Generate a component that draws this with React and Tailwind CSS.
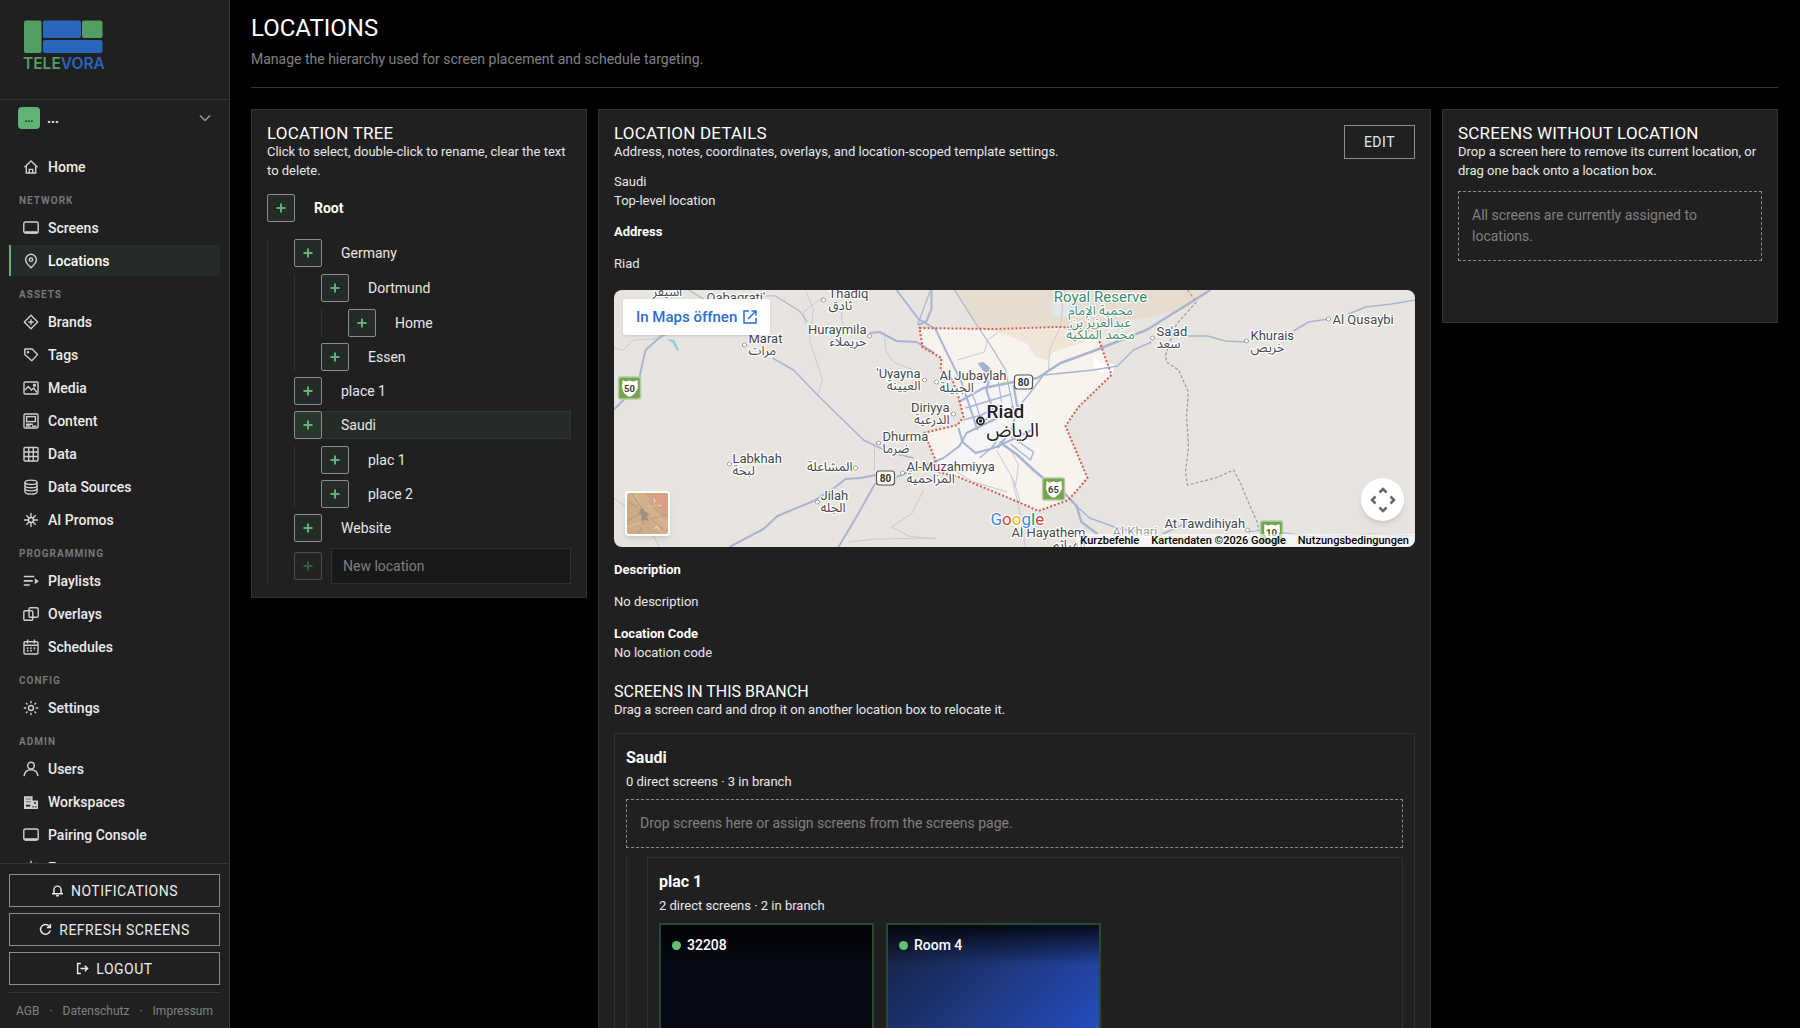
import React, { useState } from "react";

const ICONS = {
  home: (
    <>
      <path d="M1.5 8.2 8 2l6.5 6.2" />
      <path d="M3.3 7v7h9.4V7" />
      <path d="M6.3 14v-3.6h3.4V14" />
    </>
  ),
  screen: (
    <>
      <rect x="0.8" y="2" width="14.4" height="11" rx="1.8" />
      <path d="M2 12.400h12" strokeWidth="2.4" />
    </>
  ),
  pin: (
    <>
      <path d="M8 14.8C5 11.800 2.600 9.600 2.600 6.700a5.400 5.400 0 0 1 10.800 0C13.400 9.600 11 11.800 8 14.800Z" />
      <circle cx="8" cy="6.700" r="1.700" />
    </>
  ),
  brand: (
    <>
      <path d="m8 1.300 6.700 6.700L8 14.700 1.300 8Z" strokeLinejoin="round" />
      <path d="M8 5.200v5.600M5.200 8h5.600" />
    </>
  ),
  tag: (
    <>
      <path d="M1.800 2h7.400l5.300 5.600-5.700 6.200-7-6.300Z" strokeLinejoin="round" />
      <circle cx="5" cy="5.200" r="0.600" fill="currentColor" />
    </>
  ),
  media: (
    <>
      <rect x="1" y="2" width="14" height="12" rx="1" />
      <path d="m2 10 3.300-3.500L8.500 10l2.200-2L14 12.500" />
      <circle cx="11.500" cy="5.300" r="1" />
    </>
  ),
  content: (
    <>
      <rect x="1" y="1" width="14" height="14" rx="1.200" />
      <rect x="3.600" y="3.600" width="8.800" height="5" />
      <path d="M3 11.200h7M3 13h4.500" strokeWidth="1.600" />
      <path d="M9 13.200h4.500" />
    </>
  ),
  data: (
    <>
      <rect x="1" y="1.500" width="14" height="13.500" rx="1" />
      <path d="M1 6h14M1 10.500h14M5.700 1.500V15M10.300 1.500V15" />
    </>
  ),
  database: (
    <>
      <ellipse cx="8" cy="3.300" rx="6" ry="2.200" />
      <path d="M2 3.300v9.400c0 1.300 2.700 2.400 6 2.400s6-1.100 6-2.400V3.300" />
      <path d="M2 6.400c0 1.300 2.700 2.300 6 2.300s6-1 6-2.300M2 9.600c0 1.300 2.700 2.300 6 2.300s6-1 6-2.300" />
    </>
  ),
  spark: (
    <>
      <circle cx="8" cy="8" r="2.500" />
      <path d="M8 1v4.500M8 10.500V15M1 8h4.500M10.500 8H15M3.300 3.300l2.800 2.800M9.900 9.900l2.800 2.800M3.300 12.700l2.800-2.800M9.900 6.100l2.800-2.800" />
    </>
  ),
  playlist: (
    <>
      <path d="M0.800 3.500h10.500M0.800 7.800h9M0.800 12h6" strokeWidth="1.700" />
      <path d="M11.800 5.200v6l4-3Z" fill="currentColor" stroke="none" />
    </>
  ),
  overlay: (
    <>
      <rect x="0.800" y="4.800" width="9" height="9.500" rx="1.200" />
      <rect x="6" y="1.800" width="9.200" height="9.500" rx="1.200" />
    </>
  ),
  calendar: (
    <>
      <rect x="1" y="2.800" width="14" height="12.200" rx="1.200" />
      <path d="M1 6.300h14M4.600 0.600v4M11.400 0.600v4" />
      <path d="M4.600 8.300v4.500M8 8.300v4.500M11.400 8.300v3" strokeWidth="1.500" strokeDasharray="2 0.600" />
    </>
  ),
  sun: (
    <>
      <circle cx="8" cy="8" r="2.500" />
      <path d="M8 0.800v2.400M8 12.800v2.400M0.800 8h2.400M12.800 8h2.400M3 3l1.500 1.500M11.500 11.500 13 13M3 13l1.500-1.500M11.500 4.500 13 3" />
    </>
  ),
  user: (
    <>
      <circle cx="8" cy="4.600" r="3.300" />
      <path d="M1 15.200c.5-4 3.400-6.500 7-6.500s6.500 2.500 7 6.500" />
    </>
  ),
  building: (
    <>
      <path
        d="M1 2.300h8.600v4.200H15v8.500H1Z"
        fill="currentColor"
        stroke="none"
      />
      <path
        d="M3 10.800h4.300v1.800H3ZM11 8.200h2v1.600h-2ZM9.500 12h1.200v1.500H9.500ZM12.300 12h1.200v1.500h-1.200Z"
        fill="#202020"
        stroke="none"
      />
      <path d="M3 5h5M3 7.800h5" stroke="#202020" strokeWidth="0.600" />
    </>
  ),
  bell: (
    <>
      <path d="M3.600 12V7a4.400 4.400 0 0 1 8.800 0v5M1.200 12h13.600" />
      <path d="M6.300 14.500h3.400" />
    </>
  ),
  refresh: (
    <>
      <path d="M13.800 9a6 6 0 1 1-1.500-5.200l1.200 1.200" />
      <path d="M14 1.200v4.300H9.800" />
    </>
  ),
  logout: (
    <>
      <path d="M6 1.800H2v12.400h4M5.500 8H14M10.800 4.600 14.300 8l-3.500 3.400" />
    </>
  ),
};

function Icon({ name, className = "size-4", strokeWidth = 1.4 }) {
  return (
    <svg
      viewBox="0 0 16 16"
      className={className}
      fill="none"
      stroke="currentColor"
      strokeWidth={strokeWidth}
      aria-hidden="true"
    >
      {ICONS[name]}
    </svg>
  );
}

const NAV = [
  { items: [["Home", "home"]] },
  {
    title: "Network",
    items: [
      ["Screens", "screen"],
      ["Locations", "pin"],
    ],
  },
  {
    title: "Assets",
    items: [
      ["Brands", "brand"],
      ["Tags", "tag"],
      ["Media", "media"],
      ["Content", "content"],
      ["Data", "data"],
      ["Data Sources", "database"],
      ["AI Promos", "spark"],
    ],
  },
  {
    title: "Programming",
    items: [
      ["Playlists", "playlist"],
      ["Overlays", "overlay"],
      ["Schedules", "calendar"],
    ],
  },
  { title: "Config", items: [["Settings", "sun"]] },
  {
    title: "Admin",
    items: [
      ["Users", "user"],
      ["Workspaces", "building"],
      ["Pairing Console", "screen"],
      ["Events", "sun"],
    ],
  },
];

const TREE = [
  {
    name: "Germany",
    children: [
      { name: "Dortmund", children: [{ name: "Home" }] },
      { name: "Essen" },
    ],
  },
  { name: "place 1" },
  { name: "Saudi", children: [{ name: "plac 1" }, { name: "place 2" }] },
  { name: "Website" },
];

function Logo() {
  return (
    <svg viewBox="-1 0 84 54" className="h-[54px] w-[84px]" role="img" aria-label="Televora">
      <rect x="0" y="0.500" width="17.500" height="32.500" rx="2" fill="#539e62" />
      <rect x="19" y="0.500" width="38" height="17.500" rx="2" fill="#2b66bd" />
      <rect x="58" y="0.500" width="20.500" height="17.500" rx="2" fill="#539e62" />
      <rect x="19" y="20" width="59.500" height="13" rx="2" fill="#2b66bd" />
      <text x="-1" y="49" fontFamily="Inter, sans-serif" fontSize="15.500" fontWeight="600">
        <tspan fill="#539e62">TELE</tspan>
        <tspan fill="#2b66bd">VORA</tspan>
      </text>
    </svg>
  );
}

function Sidebar() {
  return (
    <aside className="flex w-[230px] shrink-0 flex-col border-r border-[#353535] bg-[#202020]">
      <div className="h-[100px] shrink-0 border-b border-[#353535] px-[23px] pt-5">
        <Logo />
      </div>

      <button className="flex shrink-0 items-center px-[18px] py-[7px] text-left">
        <span className="flex size-[22px] items-center justify-center rounded bg-[#5fb374] text-[10px] font-bold text-[#202020]">
          ...
        </span>
        <span className="ml-[7px] flex-1 text-sm leading-5 font-bold">...</span>
        <svg viewBox="0 0 12 12" className="size-3 text-[#9a9a9a]" fill="none" stroke="currentColor" strokeWidth="1.500">
          <path d="M1 3.500 6 8.500l5-5" />
        </svg>
      </button>

      <nav className="mt-[15px] min-h-0 flex-1 overflow-hidden px-[9px]">
        {NAV.map((group, i) => (
          <div key={i}>
            {group.title && (
              <h2 className="px-[10px] pt-[11px] pb-[3px] text-[10px] leading-4 font-bold tracking-widest text-[#777] uppercase">
                {group.title}
              </h2>
            )}
            <ul className="flex flex-col gap-[2px]">
              {group.items.map(([label, icon]) => (
                <li key={label}>
                  <a
                    href="#"
                    className={`flex h-[31px] items-center gap-[9px] border-l-2 pl-3 text-sm font-medium ${
                      label === "Locations"
                        ? "border-[#5fb374] bg-[#252b27] text-white"
                        : "border-transparent text-[#ececec]"
                    }`}
                  >
                    <Icon name={icon} className="size-4 text-[#cfcfcf]" />
                    {label}
                  </a>
                </li>
              ))}
            </ul>
          </div>
        ))}
      </nav>

      <div className="shrink-0 border-t border-[#353535] px-[9px] pt-[10px]">
        <div className="flex flex-col gap-[6px]">
          {[
            ["Notifications", "bell"],
            ["Refresh screens", "refresh"],
            ["Logout", "logout"],
          ].map(([label, icon]) => (
            <button
              key={label}
              className="flex h-[33px] items-center justify-center gap-[7px] border border-[#8c8c8c] text-sm tracking-[0.5px] text-[#ececec] uppercase"
            >
              <Icon name={icon} className="size-[13px]" strokeWidth={1.8} />
              {label}
            </button>
          ))}
        </div>
        <div className="mt-[7px] flex justify-between border-t border-[#353535] px-[7px] pt-2 pb-[7px] text-xs leading-5 text-[#808080]">
          <a href="#">AGB</a>
          <span>·</span>
          <a href="#">Datenschutz</a>
          <span>·</span>
          <a href="#">Impressum</a>
        </div>
      </div>
    </aside>
  );
}

function AddButton({ label, active, disabled }) {
  return (
    <button
      aria-label={label}
      disabled={disabled}
      className={`flex size-7 shrink-0 items-center justify-center rounded-xs border border-[#8c8c8c] text-[#5fb374] disabled:opacity-40 ${
        active ? "bg-[#29382d]" : "bg-[#252b27]"
      }`}
    >
      <svg viewBox="0 0 10 10" className="size-[10px]" stroke="currentColor" strokeWidth="2">
        <path d="M5 0.500v9M0.500 5h9" />
      </svg>
    </button>
  );
}

function TreeNode({ node, selected, onSelect }) {
  const active = node.name === selected;
  return (
    <li>
      <div className="flex">
        <AddButton label={`Add below ${node.name}`} active={active} />
        <button
          onClick={() => onSelect(node.name)}
          className={`h-7 flex-1 border border-l-0 pl-[19px] text-left text-sm ${
            active ? "border-[#2c3b31] bg-[#252b27]" : "border-transparent"
          }`}
        >
          {node.name}
        </button>
      </div>
      {node.children && (
        <ul className="mt-[7px] flex flex-col gap-[6px] border-l border-[#303030] pl-[26px]">
          {node.children.map((child) => (
            <TreeNode key={child.name} node={child} selected={selected} onSelect={onSelect} />
          ))}
        </ul>
      )}
    </li>
  );
}

function Panel({ className = "", children }) {
  return (
    <section className={`border border-[#303030] bg-[#202020] px-[15px] pt-[15px] pb-[13px] ${className}`}>
      {children}
    </section>
  );
}

function PanelHead({ title, text, small }) {
  return (
    <div>
      <h2
        className={`leading-[17px] text-white uppercase ${
          small ? "text-base" : "text-[17px] tracking-[0.2px]"
        }`}
      >
        {title}
      </h2>
      <p className="text-[13px] leading-[19px]">{text}</p>
    </div>
  );
}

function TreePanel() {
  const [selected, setSelected] = useState("Saudi");
  return (
    <Panel>
      <PanelHead
        title="Location tree"
        text="Click to select, double-click to rename, clear the text to delete."
      />
      <div className="mt-[14px] flex items-center gap-[19px] text-sm font-bold text-white">
        <AddButton label="Add below Root" />
        Root
      </div>
      <ul className="mt-[17px] flex flex-col gap-[6px] border-l border-[#303030] pl-[26px]">
        {TREE.map((node) => (
          <TreeNode key={node.name} node={node} selected={selected} onSelect={setSelected} />
        ))}
        <li className="flex items-center gap-[9px]">
          <AddButton label="Add location" disabled />
          <input
            aria-label="New location"
            placeholder="New location"
            className="h-9 min-w-0 flex-1 border border-[#303030] bg-[#181818] px-[11px] text-sm outline-none placeholder:text-[#808080]"
          />
        </li>
      </ul>
    </Panel>
  );
}

const PLACES = [
  { x: 215, y: 8, name: "Thadiq", ar: "ثادق", dot: [210, 10] },
  { x: 253, y: 44, name: "Huraymila", ar: "حريملاء", dot: [256, 46], end: true },
  { x: 135, y: 53, name: "Marat", ar: "مرات", dot: [131, 55] },
  { x: 307, y: 88, name: "'Uyayna", ar: "العيينة", dot: [311, 90], end: true },
  { x: 326, y: 90, name: "Al Jubaylah", ar: "الجبيلة", dot: [323, 92] },
  { x: 336, y: 122, name: "Diriyya", ar: "الدرعية", dot: [340, 124], end: true },
  { x: 269, y: 151, name: "Dhurma", ar: "ضرما", dot: [265, 153] },
  { x: 119, y: 173, name: "Labkhah", ar: "لبخة", dot: [116, 174] },
  { x: 239, y: 169, ar: "المشاعلة", dot: [242, 178], end: true },
  { x: 293, y: 181, name: "Al-Muzahmiyya", ar: "المزاحمية", dot: [289, 183] },
  { x: 207, y: 210, name: "Jilah", ar: "الجله", dot: [204, 212] },
  { x: 543, y: 46, name: "Sa'ad", ar: "سعد", dot: [539, 48] },
  { x: 637, y: 50, name: "Khurais", ar: "خريص", dot: [633, 51] },
  { x: 719, y: 34, name: "Al Qusaybi", dot: [715, 29] },
  { x: 551, y: 238, name: "At Tawdihiyah", dot: [634, 240] },
  { x: 472, y: 247, name: "Al Hayathem", ar: "الهياثم", end: true },
  { x: 93, y: 12, name: "Qabaqrati'" },
];

const BORDER =
  "M306 38 380 39 447 37 482 40 488 57 498 85 465 117 452 136 474 188 455 210 425 221 407 213 345 187 325 182 322 170 315 153 310 143 344 135 350 127 345 107 339 90 327 80 328 68 309 57Z";

function GreenShield({ x, y, label }) {
  return (
    <g>
      <rect x={x} y={y} width="22" height="22" rx="2" fill="#77a350" stroke="#b4cda0" strokeWidth="1.500" />
      <path
        d={`M${x + 4} ${y + 3}l3 1.500 4-1 4 1 4-1.500.500 8-3 5-4 3.500h-3l-4-3.500-2-5Z`}
        fill="#fff"
      />
      <text x={x + 11} y={y + 15} textAnchor="middle" fontSize="9.500" fontWeight="700" fill="#444">
        {label}
      </text>
    </g>
  );
}

function RoadShield({ x, y, label }) {
  return (
    <g>
      <rect x={x} y={y} width="18" height="14" rx="3" fill="#fff" stroke="#555" strokeWidth="1.200" />
      <text x={x + 9} y={y + 10.5} textAnchor="middle" fontSize="10" fontWeight="700" fill="#333">
        {label}
      </text>
    </g>
  );
}

function MapDrawing() {
  return (
    <svg
      viewBox="0 0 802 257"
      preserveAspectRatio="xMidYMid slice"
      className="h-full w-full"
      fontFamily="Roboto, 'Noto Sans Arabic', 'DejaVu Sans', sans-serif"
    >
      <rect width="802" height="257" fill="#e8e5e0" />
      <path d="M340 0H597L570 20 520 30 482 40 447 37 364 38Z" fill="#e6dccf" />
      <path d={BORDER} fill="#f8f3ed" />
      <path d="M372 39 482 40 470 52 440 62 434 70 422 67 414 54 396 46Z" fill="#f0e6d8" />
      <path d="M437 12h22l2 12-10 4-12-3Z" fill="#e2e6e8" />
      <path d="M481 65l6 8 14 1-2 10-14-2-5-7Z" fill="#fff" />
      {/* built-up area */}
      <path
        d="M347 100 372 88 398 92 422 86 416 110 424 140 428 168 412 172 392 160 366 170 324 172 340 150 352 130Z"
        fill="#f5f5f8"
      />
      <path d="M54 49l7 1 5 11-3-1-4-7-5-3Z" fill="#93cfd8" />
      <path d="M364 73l6-1 9 8-3 12-4-8Z" fill="#9fb0d4" />

      {/* minor roads */}
      <g fill="none" stroke="#c5cad8" strokeWidth="1">
        <path d="M0 58 10 60 20 50 40 49 60 43" />
        <path d="M192 0 200 20 196 50 206 80 209 90 204 105" />
        <path d="M225 22 222 0M235 44 228 30 229 16" />
        <path d="M271 42 272 60 280 72 300 80" />
        <path d="M210 7 190 22 192 35" />
        <path d="M261 155v25M310 200 298 224 278 237 295 246 322 249" />
        <path d="M344 70 371 62 374 50 385 42" />
        <path d="M0 208 18 220 40 246 46 257M235 252 262 249 322 248" />
        <path d="M451 -2 447 37 436 60 435 80" />
        <path d="M398 186 406 220 412 257M383 160 400 190 407 213" />
        <path d="M340 180 360 192 394 202" />
        <path d="M397 160 405 175 402 196" />
      </g>

      {/* highways */}
      <g fill="none" stroke="#a9b5d0" strokeWidth="1.500" strokeLinejoin="round">
        <path d="M0 120 24 96 32 60 48 46 60 40" strokeWidth="2" />
        <path d="M75 0 92 10M92 6 110 5 162 6 186 21 194 32" strokeWidth="1.200" />
        <path d="M159 68 180 80 205 106 250 150 275 162 300 168" />
        <path d="M256 43 266 42 283 51 303 52 321 63" strokeWidth="2" />
        <path d="M317 0 304 35" strokeWidth="1.200" />
        <path d="M283 0 305 29 322 39 332 60 348 92 364 140" strokeWidth="2" />
        <path d="M318 0v19l-5 12-8 4" strokeWidth="2" />
        <path d="M341 0 360 30 380 60 392 80 400 120" strokeWidth="1.200" />
        <path d="M116 257 150 239 164 226 200 211 222 197 232 189 247 188 263 185" strokeWidth="2" />
        <path d="M225 257 244 225 262 193" strokeWidth="2" />
        <path d="M283 187 330 168 346 156 353 143 388 126 400 116" strokeWidth="2" />
        <path d="M345 112 370 98 400 92 424 88 447 73 480 61 533 40 597 0" strokeWidth="2.500" />
        <path d="M402 120 415 105 430 85 480 80 504 76 520 60 538 52" />
        <path d="M572 46 594 46 612 51 633 52M680 41 695 32 715 29M735 24 752 17 778 14 802 10" />
        <path d="M345 138 349 152 362 163 380 158 402 148 418 140" strokeWidth="2.200" />
        <path d="M366 168 378 158 388 144M350 130 368 125 386 115M352 118 372 112 398 104" />
        <path d="M378 79 373 100 380 122 372 130M400 95 404 118 398 140 384 158" strokeWidth="2.200" />
        <path d="M386 152 404 165 420 180 432 190 448 200 463 216 468 232 484 244" strokeWidth="2.500" />
        <path d="M397 146 420 162 417 170 397 154M463 216 476 228 504 238 545 246 575 232 590 231" />
        <path d="M634 242 650 240 700 247 760 244 802 246" strokeWidth="1.200" />
        <path d="M355 95 362 112 368 132M385 92 388 112" strokeWidth="1.200" />
      </g>

      {/* province border */}
      <path
        d="M574 0 583 12 563 34 558 48 552 65 553 72 565 80 575 102 573 125 575 157 572 182 574 195 602 188 620 180 627 193 634 210 644 233 645 240"
        fill="none"
        stroke="#999"
        strokeWidth="1.200"
        strokeDasharray="3 2"
      />
      <path d={BORDER} fill="none" stroke="#dc5a4e" strokeWidth="2" strokeDasharray="2 2" />

      <GreenShield x={5} y={87} label="50" />
      <GreenShield x={429} y={188} label="65" />
      <GreenShield x={647} y={231} label="10" />
      <RoadShield x={263} y={181} label="80" />
      <RoadShield x={401} y={85} label="80" />

      <g fill="#45484d" stroke="#fff" strokeWidth="2.500" strokeLinejoin="round" paintOrder="stroke" fontSize="13">
        {PLACES.map((p) => (
          <g key={p.ar || p.name} textAnchor={p.end ? "end" : "start"}>
            {p.name && (
              <text x={p.x} y={p.y}>
                {p.name}
              </text>
            )}
            {p.ar && (
              <text x={p.x} y={p.y + 12}>
                {p.ar}
              </text>
            )}
            {p.dot && (
              <circle cx={p.dot[0]} cy={p.dot[1]} r="1.800" fill="#fff" stroke="#666" strokeWidth="1" />
            )}
          </g>
        ))}
        <text x="39" y="6">
          أشيقر
        </text>
        <text x="499" y="246" fill="#999">
          Al Kharj
        </text>
        <g fill="#3f8a6b" textAnchor="middle" fontSize="13">
          <text x="487" y="12" fontSize="15">
            Royal Reserve
          </text>
          <text x="487" y="25">
            محمية الإمام
          </text>
          <text x="487" y="37">
            عبدالعزيز بن
          </text>
          <text x="487" y="49">
            محمد الملكية
          </text>
        </g>
        <g fill="#202124">
          <text x="373" y="128" fontSize="19" fontWeight="500">
            Riad
          </text>
          <text x="373" y="147" fontSize="19">
            الرياض
          </text>
        </g>
        <text x="377" y="235" fontSize="17">
          <tspan fill="#4285f4">G</tspan>
          <tspan fill="#db4437">o</tspan>
          <tspan fill="#f4b400">o</tspan>
          <tspan fill="#4285f4">g</tspan>
          <tspan fill="#0f9d58">l</tspan>
          <tspan fill="#db4437">e</tspan>
        </text>
      </g>
      <circle cx="367" cy="131" r="3.500" fill="#fff" stroke="#222" strokeWidth="1.800" />
      <circle cx="367" cy="131" r="1.700" fill="#222" />
    </svg>
  );
}

function LocationMap() {
  return (
    <div className="relative h-[257px] overflow-hidden rounded-lg">
      <MapDrawing />

      <a
        href="#"
        className="absolute top-[9px] left-[9px] flex h-9 items-center gap-[6px] rounded-xs bg-white px-[13px] text-[15px] font-medium text-[#2a6fd8] shadow"
      >
        In Maps öffnen
        <svg viewBox="0 0 14 14" className="size-[14px]" fill="none" stroke="currentColor" strokeWidth="1.500">
          <path d="M6 1H1v12h12V8M8.500 1H13v4.500M13 1 5 9" />
        </svg>
      </a>

      <button
        aria-label="Satellit"
        className="absolute bottom-[11px] left-[11px] size-[45px] overflow-hidden rounded border-2 border-white shadow-md"
      >
        <svg viewBox="0 0 41 41" className="size-full">
          <rect width="41" height="41" fill="#d3b08c" />
          <path d="M18 0h23v24L30 16Z" fill="#d5a083" />
          <path d="M0 6 12 12 22 26 32 41H0Z" fill="#cdab88" />
          <path d="M13 16l3-1 2 4 4 1-2 4 2 4-4-1-4 1 1-5-3-3Z" fill="#9c927c" />
          <path d="M4 0 14 14 24 26 38 38M0 28l14-8M22 8l8 10 11 6M2 10l9 4M17 28l-5 13M24 26l14-4" stroke="#b5926f" strokeWidth="0.800" fill="none" />
          <path d="M0 34 12 30 20 38M8 2l6 8M30 22l10 10M20 14l10-2" stroke="#e0c4a2" strokeWidth="0.800" fill="none" />
          <path d="M26 5l2 2-1 3M31 12l3 1M27 36l3-3 2 4" stroke="#efe4d4" fill="none" />
        </svg>
      </button>

      <button
        aria-label="Kamerasteuerung"
        className="absolute right-[11px] bottom-[26px] flex size-[43px] items-center justify-center rounded-full bg-white text-[#666] shadow-md"
      >
        <svg viewBox="0 0 26 26" className="size-[26px]" fill="none" stroke="currentColor" strokeWidth="2.500">
          <path d="m9.500 5.500 3.500-3.500 3.500 3.500M9.500 20.500l3.500 3.500 3.500-3.500M5.500 9.500 2 13l3.500 3.500M20.500 9.500 24 13l-3.500 3.500" />
        </svg>
      </button>

      <div className="absolute right-0 bottom-0 flex h-[13px] items-center gap-3 bg-white/60 pr-[6px] pl-1 text-[11px] font-medium text-black">
        <button>Kurzbefehle</button>
        <span>Kartendaten ©2026 Google</span>
        <a href="#">Nutzungsbedingungen</a>
      </div>
    </div>
  );
}

function BranchHead({ name, info }) {
  return (
    <>
      <h3 className="text-base leading-5 font-bold text-white">{name}</h3>
      <p className="mt-1 text-[13px] leading-[19px]">{info}</p>
    </>
  );
}

function ScreenCard({ name, className }) {
  return (
    <article className={`h-[214px] w-[215px] border-2 border-[#264a30] ${className}`}>
      <div className="flex h-10 items-center gap-[6px] bg-linear-to-b from-black/80 to-transparent px-[11px] text-sm font-medium text-white">
        <span className="size-[9px] rounded-full bg-[#62c073]" />
        {name}
      </div>
    </article>
  );
}

function DetailsPanel() {
  return (
    <Panel className="text-[13px] leading-[19px]">
      <div className="flex items-start justify-between">
        <div>
          <PanelHead
            title="Location details"
            text="Address, notes, coordinates, overlays, and location-scoped template settings."
          />
          <p className="mt-[11px]">Saudi</p>
          <p>Top-level location</p>
        </div>
        <button className="h-[34px] border border-[#8c8c8c] px-[19px] text-sm tracking-[0.5px] uppercase">
          Edit
        </button>
      </div>

      <h3 className="mt-3 font-bold text-white">Address</h3>
      <p className="mt-[13px] mb-[17px]">Riad</p>
      <LocationMap />
      <h3 className="mt-[13px] font-bold text-white">Description</h3>
      <p className="mt-[13px]">No description</p>
      <h3 className="mt-[13px] font-bold text-white">Location Code</h3>
      <p>No location code</p>

      <div className="mt-[21px]">
        <PanelHead
          small
          title="Screens in this branch"
          text="Drag a screen card and drop it on another location box to relocate it."
        />
      </div>

      <div className="mt-[14px] border border-[#303030] px-[11px] pt-[14px] pb-3">
        <BranchHead name="Saudi" info="0 direct screens · 3 in branch" />
        <p className="mt-2 border border-dashed border-[#8c8c8c] px-[13px] py-[13px] text-sm leading-[21px] text-[#808080]">
          Drop screens here or assign screens from the screens page.
        </p>
        <div className="mt-[9px] border-l border-[#303030] pl-5">
          <div className="border border-[#303030] px-[11px] pt-[14px] pb-3">
            <BranchHead name="plac 1" info="2 direct screens · 2 in branch" />
            <div className="mt-2 flex flex-wrap gap-3">
              <ScreenCard name="32208" className="bg-[#070914]" />
              <ScreenCard
                name="Room 4"
                className="bg-linear-to-br from-[#16203e] to-[#2a5cf0]"
              />
            </div>
          </div>
        </div>
      </div>
    </Panel>
  );
}

export default function App() {
  return (
    <div className="flex h-screen overflow-hidden bg-black font-[Roboto,sans-serif] text-[#e8e8e8]">
      <Sidebar />
      <main className="min-w-0 flex-1 overflow-y-auto pr-[22px] pb-6 pl-[21px] [scrollbar-width:none]">
        <header className="border-b border-[#353535] pt-3 pb-[18px]">
          <h1 className="text-2xl leading-8 text-white uppercase">Locations</h1>
          <p className="mt-[5px] text-sm leading-5 text-[#808080]">
            Manage the hierarchy used for screen placement and schedule targeting.
          </p>
        </header>

        <div className="mt-[21px] grid grid-cols-[336px_minmax(0,1fr)_336px] items-start gap-[11px]">
          <TreePanel />
          <DetailsPanel />
          <Panel className="min-h-[214px]">
            <PanelHead
              title="Screens without location"
              text="Drop a screen here to remove its current location, or drag one back onto a location box."
            />
            <p className="mt-[11px] border border-dashed border-[#8c8c8c] px-[13px] py-[13px] text-sm leading-[21px] text-[#808080]">
              All screens are currently assigned to locations.
            </p>
          </Panel>
        </div>
      </main>
    </div>
  );
}
